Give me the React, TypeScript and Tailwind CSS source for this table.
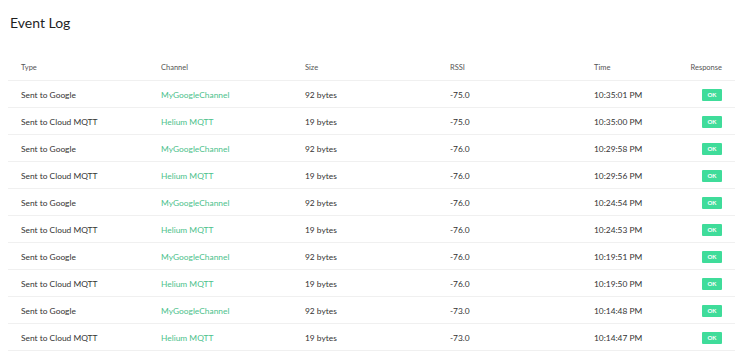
const rows = [
  { type: 'Sent to Google', channel: 'MyGoogleChannel', size: '92 bytes', rssi: '-75.0', time: '10:35:01 PM' },
  { type: 'Sent to Cloud MQTT', channel: 'Helium MQTT', size: '19 bytes', rssi: '-75.0', time: '10:35:00 PM' },
  { type: 'Sent to Google', channel: 'MyGoogleChannel', size: '92 bytes', rssi: '-76.0', time: '10:29:58 PM' },
  { type: 'Sent to Cloud MQTT', channel: 'Helium MQTT', size: '19 bytes', rssi: '-76.0', time: '10:29:56 PM' },
  { type: 'Sent to Google', channel: 'MyGoogleChannel', size: '92 bytes', rssi: '-76.0', time: '10:24:54 PM' },
  { type: 'Sent to Cloud MQTT', channel: 'Helium MQTT', size: '19 bytes', rssi: '-76.0', time: '10:24:53 PM' },
  { type: 'Sent to Google', channel: 'MyGoogleChannel', size: '92 bytes', rssi: '-76.0', time: '10:19:51 PM' },
  { type: 'Sent to Cloud MQTT', channel: 'Helium MQTT', size: '19 bytes', rssi: '-76.0', time: '10:19:50 PM' },
  { type: 'Sent to Google', channel: 'MyGoogleChannel', size: '92 bytes', rssi: '-73.0', time: '10:14:48 PM' },
  { type: 'Sent to Cloud MQTT', channel: 'Helium MQTT', size: '19 bytes', rssi: '-73.0', time: '10:14:47 PM' },
];

const gridCols = 'grid grid-cols-[140px_144px_145px_144px_1fr_auto] items-center px-[13px]';

export default function App() {
  return (
    <div className="w-[740px] h-[354px] bg-white overflow-hidden font-['Lato',sans-serif]">
      <h1 className="pl-[10px] pt-[12px] h-[54px] text-[14px] leading-[22px] text-[#1f1f1f]">Event Log</h1>
      <div className="mx-[8px] w-[727px]">
        <div className={`${gridCols} h-[27px] pt-[1px] border-b border-[#f0f0f0] text-[7.5px] text-[#555]`}>
          <span>Type</span>
          <span>Channel</span>
          <span>Size</span>
          <span>RSSI</span>
          <span>Time</span>
          <span className="text-right">Response</span>
        </div>
        {rows.map((r, i) => (
          <div key={i} className={`${gridCols} h-[27px] pt-[2px] border-b border-[#f0f0f0] text-[8.4px] text-[#333]`}>
            <span>{r.type}</span>
            <span className="text-[#4cbf8c]">{r.channel}</span>
            <span>{r.size}</span>
            <span>{r.rssi}</span>
            <span>{r.time}</span>
            <span className="flex justify-end">
              <span className="w-[20px] h-[12px] -mt-[1px] rounded-[1px] bg-[#3fdc9a] text-white text-[6px] font-bold flex items-center justify-center">
                OK
              </span>
            </span>
          </div>
        ))}
      </div>
    </div>
  );
}
